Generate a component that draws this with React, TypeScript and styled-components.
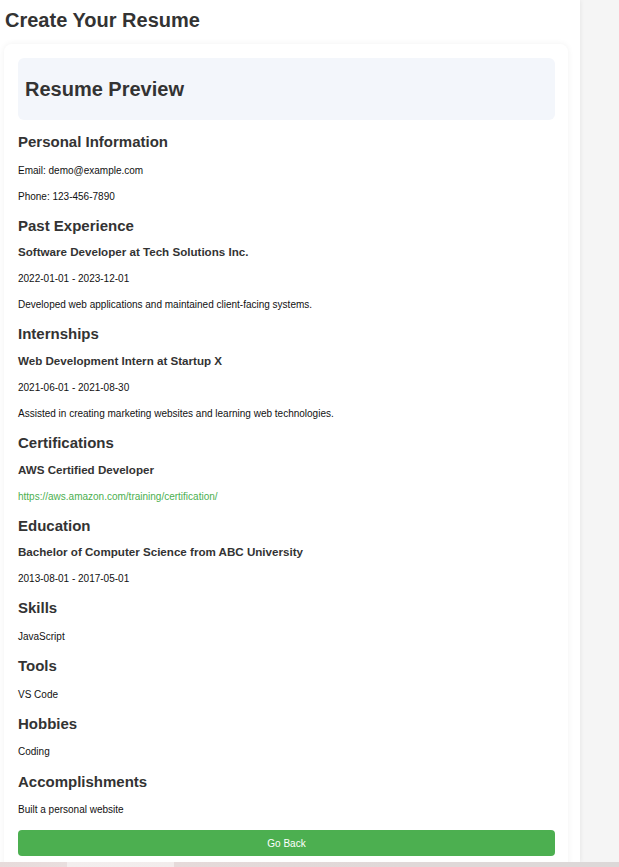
import React from 'react';
import styled, { createGlobalStyle } from 'styled-components';

const GlobalStyle = createGlobalStyle`
  html, body {
    margin: 0;
    padding: 0;
    height: 100%;
    overflow: hidden;
    font-family: "Liberation Sans", Arial, sans-serif;
  }
  #root {
    height: 100%;
  }
`;

const Page = styled.div`
  display: flex;
  flex-direction: column;
  height: 100vh;
`;

const Main = styled.div`
  display: flex;
  flex: 1;
  min-height: 0;
  overflow: hidden;
`;

const Panel = styled.div`
  width: 580px;
  flex-shrink: 0;
  box-sizing: border-box;
  padding: 0 12px 0 4px;
  background: #fff;
  box-shadow: 1px 0 4px rgba(0, 0, 0, 0.06);
  position: relative;
  z-index: 1;
`;

const Aside = styled.div`
  flex: 1;
  background: #f5f5f5;
`;

const Strip = styled.div`
  height: 5px;
  flex-shrink: 0;
  background: linear-gradient(
    90deg,
    #e7dbdb 0,
    #e9dede 67px,
    #f3eeee 67px,
    #f2ecec 174px,
    #e6dada 174px,
    #e0d8d8 400px,
    #dcd8d8 100%
  );
`;

const Title = styled.h1`
  margin: 8px 0 12px 1px;
  font-size: 20px;
  line-height: 24px;
  font-weight: bold;
  color: #333;
`;

const Card = styled.div`
  background: #fff;
  border-radius: 8px;
  padding: 14px 13px 14px 14px;
  box-shadow: 0 0 6px rgba(0, 0, 0, 0.06);
`;

const PreviewHeader = styled.div`
  background: #f3f6fb;
  border-radius: 6px;
  padding: 19px 7px;
  margin-bottom: 13px;
`;

const PreviewTitle = styled.h2`
  margin: 0;
  font-size: 20px;
  line-height: 24px;
  font-weight: bold;
  color: #333;
`;

const SectionTitle = styled.h3`
  margin: 12.2px 0 11.5px;
  font-size: 15px;
  line-height: 18px;
  font-weight: bold;
  color: #333;
`;

const ItemTitle = styled.h4`
  margin: 10px 0 13px;
  font-size: 11.6px;
  line-height: 12px;
  font-weight: bold;
  color: #333;
`;

const Text = styled.p`
  margin: 10px 0;
  font-size: 10px;
  line-height: 16px;
  color: #111;
`;

const Link = styled.a`
  color: #4caf50;
  text-decoration: none;
`;

const BackButton = styled.button`
  display: block;
  width: 100%;
  height: 26px;
  margin-top: 12px;
  border: none;
  border-radius: 4px;
  background: #4caf50;
  color: #fff;
  font-family: inherit;
  font-size: 10px;
  cursor: pointer;
`;

interface Entry {
  title: string;
  dates?: string;
  description?: string;
  link?: string;
}

const experience: Entry[] = [
  {
    title: 'Software Developer at Tech Solutions Inc.',
    dates: '2022-01-01 - 2023-12-01',
    description: 'Developed web applications and maintained client-facing systems.',
  },
];

const internships: Entry[] = [
  {
    title: 'Web Development Intern at Startup X',
    dates: '2021-06-01 - 2021-08-30',
    description: 'Assisted in creating marketing websites and learning web technologies.',
  },
];

const certifications: Entry[] = [
  {
    title: 'AWS Certified Developer',
    link: 'https://aws.amazon.com/training/certification/',
  },
];

const education: Entry[] = [
  {
    title: 'Bachelor of Computer Science from ABC University',
    dates: '2013-08-01 - 2017-05-01',
  },
];

const EntryList: React.FC<{ heading: string; items: Entry[] }> = ({ heading, items }) => (
  <>
    <SectionTitle>{heading}</SectionTitle>
    {items.map(item => (
      <React.Fragment key={item.title}>
        <ItemTitle>{item.title}</ItemTitle>
        {item.dates && <Text>{item.dates}</Text>}
        {item.description && <Text>{item.description}</Text>}
        {item.link && (
          <Text>
            <Link href={item.link}>{item.link}</Link>
          </Text>
        )}
      </React.Fragment>
    ))}
  </>
);

const SimpleList: React.FC<{ heading: string; items: string[] }> = ({ heading, items }) => (
  <>
    <SectionTitle>{heading}</SectionTitle>
    {items.map(item => (
      <Text key={item}>{item}</Text>
    ))}
  </>
);

export default function App() {
  return (
    <Page>
      <GlobalStyle />
      <Main>
        <Panel>
          <Title>Create Your Resume</Title>
          <Card>
            <PreviewHeader>
              <PreviewTitle>Resume Preview</PreviewTitle>
            </PreviewHeader>
            <SectionTitle>Personal Information</SectionTitle>
            <Text>Email: demo@example.com</Text>
            <Text>Phone: 123-456-7890</Text>
            <EntryList heading="Past Experience" items={experience} />
            <EntryList heading="Internships" items={internships} />
            <EntryList heading="Certifications" items={certifications} />
            <EntryList heading="Education" items={education} />
            <SimpleList heading="Skills" items={['JavaScript']} />
            <SimpleList heading="Tools" items={['VS Code']} />
            <SimpleList heading="Hobbies" items={['Coding']} />
            <SimpleList heading="Accomplishments" items={['Built a personal website']} />
            <BackButton>Go Back</BackButton>
          </Card>
        </Panel>
        <Aside />
      </Main>
      <Strip />
    </Page>
  );
}
